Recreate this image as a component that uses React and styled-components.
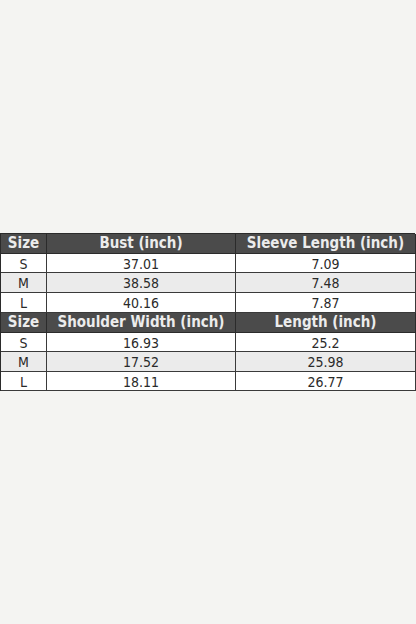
import React from 'react';
import styled, { createGlobalStyle } from 'styled-components';

const GlobalStyle = createGlobalStyle`
  html, body {
    margin: 0;
    padding: 0;
    background: #f4f4f2;
  }
`;

const sections = [
  {
    head: ['Size', 'Bust (inch)', 'Sleeve Length (inch)'],
    rows: [
      ['S', '37.01', '7.09'],
      ['M', '38.58', '7.48'],
      ['L', '40.16', '7.87'],
    ],
  },
  {
    head: ['Size', 'Shoulder Width (inch)', 'Length (inch)'],
    rows: [
      ['S', '16.93', '25.2'],
      ['M', '17.52', '25.98'],
      ['L', '18.11', '26.77'],
    ],
  },
];

export default function App() {
  return (
    <>
      <GlobalStyle />
      <Page>
        <Chart>
          {sections.map((section, si) => (
            <React.Fragment key={si}>
              <HeadRow>
                {section.head.map((h, i) => (
                  <HeadCell key={i}>{h}</HeadCell>
                ))}
              </HeadRow>
              {section.rows.map((row, ri) => (
                <Row key={ri} $shaded={ri === 1}>
                  {row.map((c, ci) => (
                    <Cell key={ci}>{c}</Cell>
                  ))}
                </Row>
              ))}
            </React.Fragment>
          ))}
        </Chart>
      </Page>
    </>
  );
}

const Page = styled.div`
  width: 416px;
  height: 624px;
  display: flex;
  align-items: center;
  justify-content: flex-start;
  box-sizing: border-box;
`;

const Chart = styled.div`
  width: 415px;
  display: grid;
  grid-template-columns: 46px 189px 180px;
  border-top: 1px solid #2b2b2b;
  border-left: 1px solid #2b2b2b;
  box-sizing: border-box;
  font-family: 'Liberation Sans Narrow', 'DejaVu Sans Condensed', 'Roboto Condensed', 'Liberation Sans', sans-serif;
`;

const HeadRow = styled.div`
  display: contents;
`;

const HeadCell = styled.div`
  height: 19px;
  line-height: 19px;
  background: #4b4b4b;
  color: #ececec;
  font-weight: bold;
  font-size: 15px;
  text-align: center;
  border-right: 1px solid #2b2b2b;
  border-bottom: 1px solid #2b2b2b;
  white-space: nowrap;
  overflow: hidden;
`;

const Row = styled.div`
  display: contents;
  & > div {
    background: ${(p) => (p.$shaded ? '#ebebeb' : '#ffffff')};
  }
`;

const Cell = styled.div`
  height: 18.6px;
  line-height: 20px;
  color: #2a2a2a;
  font-size: 14px;
  text-align: center;
  border-right: 1px solid #3a3a3a;
  border-bottom: 1px solid #3a3a3a;
  white-space: nowrap;
`;
